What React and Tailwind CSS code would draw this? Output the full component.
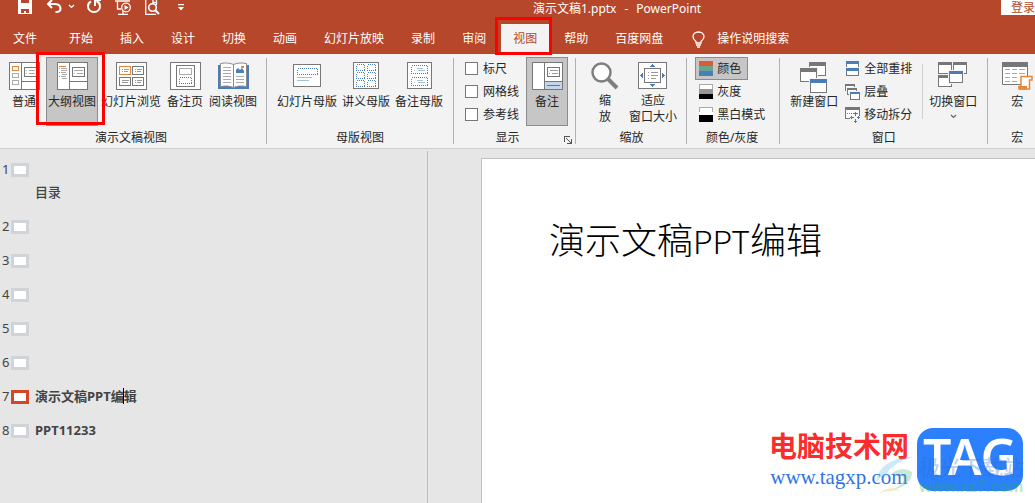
import React, { useState } from 'react';

const TABS = ['开始', '插入', '设计', '切换', '动画', '幻灯片放映', '录制', '审阅', '视图', '帮助', '百度网盘'];

const SLIDES = [
    { id: 1, body: '目录' },
    { id: 2 },
    { id: 3 },
    { id: 4 },
    { id: 5 },
    { id: 6 },
    { id: 7, title: '演示文稿PPT编', rest: '辑' },
    { id: 8, title: 'PPT11233' }
];

const GRAY = '#777777';
const BLUE = '#4a7ebb';
const ORANGE = '#e8873a';

const Icon = ({ w, h, children, crisp = true }) => (
    <svg width={w} height={h} viewBox={`0 0 ${w} ${h}`} fill='none' shapeRendering={crisp ? 'crispEdges' : 'auto'} aria-hidden='true' className='shrink-0'>
        {children}
    </svg>
);

/* ---- quick access toolbar ---- */

const SaveIcon = () => (
    <Icon w={14} h={14}>
        <path d='M0 0H14V14H0Z' fill='#fff' />
        <path d='M3 0H11V3H3ZM3 9H11V13H3Z' fill='#b7472a' />
        <path d='M6 11H8V13H6Z' fill='#fff' />
    </Icon>
);

const UndoIcon = () => (
    <Icon w={15} h={14} crisp={false}>
        <path d='M5 0L1 4L5 8M1.500 4H8C12 4 13.500 6.500 13.500 9C13.500 11 11.500 12 8.500 12' stroke='#fff' strokeWidth='2' />
    </Icon>
);

const RedoIcon = () => (
    <Icon w={14} h={14} crisp={false}>
        <path d='M4 1.500C2 2.500 1 4.300 1 6.200C1 9.500 3.600 12 7 12C10.400 12 13 9.500 13 6.200C13 4 11.800 2.200 9.500 1' stroke='#fff' strokeWidth='2' />
        <path d='M8 6V0H14' stroke='#fff' strokeWidth='2' />
    </Icon>
);

const PlayIcon = () => (
    <Icon w={16} h={15} crisp={false}>
        <path d='M0 1H15M2.500 1V9H6M3 14.300H13M8 11V14' stroke='#fff' strokeWidth='1.300' />
        <circle cx='11' cy='7.500' r='4.300' stroke='#fff' strokeWidth='1.300' fill='#b7472a' />
        <path d='M9.500 5L13.500 7.500L9.500 10Z' fill='#fff' />
    </Icon>
);

const PreviewIcon = () => (
    <Icon w={15} h={15} crisp={false}>
        <path d='M11 14.300H.700V0M11.500 5V0M8 0V2.500H11' stroke='#fff' strokeWidth='1.300' />
        <circle cx='7.500' cy='7.500' r='3.800' stroke='#fff' strokeWidth='1.600' />
        <path d='M10 10L14 14' stroke='#fff' strokeWidth='2.200' />
    </Icon>
);

const ChevronIcon = ({ color }) => (
    <Icon w={7} h={5} crisp={false}>
        <path d='M1 1L3.500 3.500L6 1' stroke={color} strokeWidth='1.200' />
    </Icon>
);

const MoreIcon = () => (
    <Icon w={6} h={7} crisp={false}>
        <path d='M0 0H6V1.300H0ZM0 3H6L3 6.500Z' fill='#fff' />
    </Icon>
);

const BulbIcon = () => (
    <Icon w={13} h={17} crisp={false}>
        <path d='M4 12V10.500C2.500 9.300 1 8 1 5.800C1 3 3.300 1 6.500 1C9.700 1 12 3 12 5.800C12 8 10.500 9.300 9 10.500V12ZM4 14H9M5 16H8' stroke='#fff' strokeWidth='1.300' />
    </Icon>
);

/* ---- ribbon ---- */

const NormalIcon = () => (
    <Icon w={31} h={28}>
        <path d='M.5 .5H30.500V27.500H.5Z' fill='#fff' stroke={GRAY} />
        <path d='M12.500 1V27M13 19.500H30' stroke={GRAY} />
        <path d='M3.500 4.500H9.500V8.500H3.500Z' stroke={ORANGE} />
        <path d='M3.500 11.500H9.500V15.500H3.500ZM3.500 18.500H9.500V22.500H3.500Z' stroke='#aaa' />
        <path d='M15.500 5.500H27.500V14.500H15.500Z' stroke={GRAY} />
        <path d='M17 8.500H18M20 8.500H26M17 11.500H18M20 11.500H26' stroke='#aaa' />
    </Icon>
);

const OutlineIcon = () => (
    <Icon w={31} h={28}>
        <path d='M.5 .5H30.500V27.500H.5Z' fill='#fff' stroke={GRAY} />
        <path d='M12.500 1V27M13 19.500H30' stroke={GRAY} />
        <path d='M2 4.500H9' stroke={ORANGE} />
        <path d='M4 6.500H10M4 8.500H10M4 10.500H9M5 12.500H10M4 14.500H9M5 16.500H10' stroke='#aaa' />
        <path d='M2 6.500H3M2 10.500H3M2 14.500H3' stroke={ORANGE} />
        <path d='M15.500 5.500H27.500V14.500H15.500Z' stroke={GRAY} />
        <path d='M17 8.500H26M17 11.500H18M20 11.500H26' stroke='#aaa' />
    </Icon>
);

const SorterIcon = () => (
    <Icon w={31} h={28}>
        <path d='M.5 .5H30.500V27.500H.5Z' fill='#fff' stroke={GRAY} />
        <path d='M3.500 4.500H14.500V12.500H3.500Z' stroke={ORANGE} />
        <path d='M16.500 4.500H27.500V12.500H16.500ZM3.500 15.500H14.500V23.500H3.500ZM16.500 15.500H27.500V23.500H16.500Z' stroke={GRAY} />
        <path d='M6 7.500H7M8 7.500H13M6 9.500H7M8 9.500H12M19 7.500H20M21 7.500H26M19 9.500H20M21 9.500H25M6 18.500H13M6 20.500H12M19 18.500H20M21 18.500H26M19 20.500H20M21 20.500H25' stroke='#999' />
    </Icon>
);

const NotesPageIcon = () => (
    <Icon w={31} h={28}>
        <path d='M.5 .5H30.500V27.500H.5Z' fill='#fff' stroke={GRAY} />
        <path d='M6.500 3.500H24.500V24.500H6.500Z' stroke={GRAY} />
        <path d='M9.500 6.500H21.500V12.500H9.500Z' stroke='#aaa' />
        <path d='M9.500 15.500H21.500V21.500H9.500Z' stroke={BLUE} strokeDasharray='1 1' />
    </Icon>
);

const ReadingIcon = () => (
    <Icon w={31} h={28} crisp={false}>
        <path d='M0 3H31V27H0Z' fill={BLUE} />
        <path d='M2.500 1.500C8 .5 12 1 15.500 2.500C19 1 23 .5 28.500 1.500V24.500C23 23.500 19 24 15.500 25.500C12 24 8 23.500 2.500 24.500Z' fill='#fff' stroke='#8a8a8a' />
        <path d='M15.500 2.500V25.500' stroke='#8a8a8a' />
        <path d='M5 5.500H13M5 8.500H13M5 11.500H13M5 14.500H13M5 17.500H13M5 20.500H13M18 14.500H26M18 17.500H26M18 20.500H26' stroke='#aaa' />
        <path d='M18 11V8L20 6L22 8L24 6L26 9V11Z' fill={BLUE} />
        <path d='M23 4H26V6H23Z' fill={ORANGE} />
    </Icon>
);

const SlideMasterIcon = () => (
    <Icon w={28} h={24}>
        <rect x='.5' y='.5' width='27' height='22' rx='1' fill='#fff' stroke={GRAY} />
        <path d='M4.500 4.500H24.500V10.500H4.500Z' stroke={BLUE} strokeDasharray='1 1' />
        <path d='M4 13.500H19M4 16.500H16' stroke='#a5bfdf' />
    </Icon>
);

const HandoutIcon = () => (
    <Icon w={26} h={27}>
        <path d='M.5 .5H25.500V26.500H.5Z' fill='#fff' stroke={GRAY} />
        <path d='M3.500 2.500H11.500V8.500H3.500ZM14.500 2.500H22.500V8.500H14.500ZM3.500 10.500H11.500V16.500H3.500ZM14.500 10.500H22.500V16.500H14.500ZM3.500 18.500H11.500V24.500H3.500ZM14.500 18.500H22.500V24.500H14.500Z' stroke={BLUE} strokeDasharray='1 1' />
    </Icon>
);

const NotesMasterIcon = () => (
    <Icon w={25} h={27}>
        <path d='M.5 .5H24.500V26.500H.5Z' fill='#fff' stroke={GRAY} />
        <path d='M4.500 3.500H20.500V11.500H4.500ZM4.500 15.500H20.500V23.500H4.500Z' stroke={BLUE} strokeDasharray='1 1' />
        <path d='M10 6.500H16M7 8.500H8M11 8.500H18M10 18.500H16M7 20.500H8M11 20.500H18' stroke='#a5bfdf' />
    </Icon>
);

const NotesIcon = () => (
    <Icon w={31} h={28}>
        <path d='M.5 .5H30.500V27.500H.5Z' fill='#fff' stroke={GRAY} />
        <path d='M13 20H30V27H13Z' fill='#c3d6ec' />
        <path d='M12.500 1V27M13 19.500H30' stroke={GRAY} />
        <path d='M15 23.500H28' stroke={BLUE} />
        <path d='M15.500 5.500H27.500V14.500H15.500Z' stroke={GRAY} />
        <path d='M18 8.500H26M17 11.500H18M20 11.500H26' stroke='#999' />
    </Icon>
);

const ZoomIcon = () => (
    <Icon w={28} h={28} crisp={false}>
        <circle cx='10.500' cy='10.500' r='9' fill='#fff' stroke='#7f7f7f' strokeWidth='2.500' />
        <path d='M17 17L26 26' stroke='#7f7f7f' strokeWidth='4' />
    </Icon>
);

const FitIcon = () => (
    <Icon w={30} h={28}>
        <path d='M.5 .5H28.500V26.500H.5Z' fill='#fff' stroke={GRAY} />
        <path d='M6.500 6.500H22.500V20.500H6.500Z' stroke={GRAY} />
        <path d='M10 10.500H11M13 10.500H20M10 13.500H11M13 13.500H20M10 16.500H11M13 16.500H18' stroke='#999' />
        <path d='M12 5L14.500 2L17 5ZM12 22L14.500 25L17 22ZM5 11L2 13.500L5 16ZM24 11L27 13.500L24 16Z' fill={BLUE} />
    </Icon>
);

const Swatch = ({ colors, outline }) => (
    <Icon w={14} h={15}>
        {colors.map((c, i) => (
            <rect key={c} x='0' y={(15 / colors.length) * i} width='14' height={15 / colors.length} fill={c} />
        ))}
        {outline && <path d='M.5 5V.5H13.500V5' stroke='#aaa' />}
    </Icon>
);

// small window with a title bar, used by all the window icons
const Win = ({ x, y, w, h, bar = 3, color = GRAY }) => (
    <g>
        <rect x={x - 1} y={y - 1} width={w + 2} height={h + 2} fill='#f3f3f3' />
        <rect x={x + 0.5} y={y + 0.5} width={w - 1} height={h - 1} fill='#fff' stroke={GRAY} />
        <rect x={x} y={y} width={w} height={bar} fill={color} />
    </g>
);

const NewWindowIcon = () => (
    <Icon w={28} h={32}>
        <Win x={9} y={0} w={17} h={14} bar={4} />
        <Win x={0} y={6} w={17} h={14} bar={4} />
        <Win x={10} y={17} w={17} h={14} bar={4} color={BLUE} />
    </Icon>
);

const ArrangeIcon = () => (
    <Icon w={15} h={16}>
        <Win x={1} y={0} w={13} h={7} color={BLUE} />
        <Win x={1} y={7} w={13} h={8} color={BLUE} />
    </Icon>
);

const CascadeIcon = () => (
    <Icon w={15} h={16}>
        <Win x={0} y={0} w={10} h={7} bar={2} />
        <Win x={2} y={4} w={10} h={7} bar={2} />
        <Win x={5} y={8} w={10} h={8} bar={2} color={BLUE} />
    </Icon>
);

const SplitIcon = () => (
    <Icon w={15} h={16}>
        <path d='M.5 .5H14.500V11.500H.5Z' fill='#fff' stroke={GRAY} />
        <path d='M0 0H15V3H0Z' fill={GRAY} />
        <path d='M2 6.500H13' stroke={BLUE} strokeDasharray='1 1' />
        <path d='M10.500 4V16M5 10.500H15' stroke='#f8f8f8' strokeWidth='3' />
        <path d='M10.500 5V9M10.500 12V16M5 10.500H9M12 10.500H15M9 6.500H12M9 14.500H12M6.500 9V12M13.500 9V12' stroke={BLUE} />
    </Icon>
);

const SwitchIcon = () => (
    <Icon w={30} h={26}>
        <Win x={0} y={0} w={14} h={12} />
        <Win x={15} y={0} w={14} h={12} />
        <Win x={0} y={13} w={14} h={12} />
        <Win x={11} y={9} w={14} h={12} color={BLUE} />
    </Icon>
);

const MacroIcon = () => (
    <Icon w={31} h={28} crisp={false}>
        <path d='M.5 .5H25.500V22.500H.5Z' fill='#fff' stroke={GRAY} />
        <path d='M0 0H26V5H0Z' fill={GRAY} />
        <path d='M3 7.500H8M10 7.500H15M17 7.500H23M3 11.500H8M10 11.500H15M17 11.500H23M3 15.500H8M10 15.500H15M3 19.500H8M10 19.500H15' stroke='#aaa' />
        <path d='M19 14.500H30V18H27.500V27H17V24.500H19Z' fill='#fff' stroke={ORANGE} strokeWidth='1.500' />
        <path d='M16.500 24H25V27.500H17Z' fill={ORANGE} />
    </Icon>
);

const LauncherIcon = () => (
    <Icon w={8} h={8}>
        <path d='M.5 6V.5H6M7.500 3V7.500H3' stroke='#555' />
        <path d='M2 2L7 7' stroke='#555' shapeRendering='auto' />
    </Icon>
);

const BigButton = ({ icon, label, active, children }) => (
    <button
        type='button'
        className={`relative flex h-[69px] min-w-[42px] shrink-0 flex-col items-center border px-px pt-1 leading-4 whitespace-pre ${active ? 'border-[#8c8c8c] bg-[#c6c6c6]' : 'border-transparent'}`}
    >
        <span className='flex h-8 items-start'>{icon}</span>
        {label}
        {children}
    </button>
);

const SmallButton = ({ icon, label, active }) => (
    <button
        type='button'
        className={`flex h-[23px] items-center gap-1 border pl-[3px] whitespace-nowrap ${active ? 'border-[#8c8c8c] bg-[#c6c6c6] pr-1.5' : 'border-transparent pr-[3px]'}`}
    >
        {icon}
        {label}
    </button>
);

const Group = ({ name, className, children, launcher }) => (
    <>
        <section aria-label={name} className={`flex shrink-0 flex-col ${className}`}>
            <div className='flex flex-1 items-start gap-px'>{children}</div>
            <div className='flex h-[18px] items-start justify-center leading-4'>
                <span className={launcher ? 'flex-1 pr-3.5 text-center' : ''}>{name}</span>
                {launcher && (
                    <button type='button' aria-label='更多' className='pt-1.5 pr-0.5'>
                        <LauncherIcon />
                    </button>
                )}
            </div>
        </section>
        <div className='mt-px mb-1 w-px shrink-0 bg-[#b1b1b1]' />
    </>
);

const CheckOption = ({ label }) => (
    <label className='flex h-[23px] items-center gap-[5px]'>
        <input type='checkbox' className='size-[13px] appearance-none border border-[#777] bg-white checked:bg-[#b7472a]' />
        {label}
    </label>
);

const TitleBar = () => (
    <header className='flex h-6 shrink-0 items-start text-white'>
        <div className='flex flex-8 items-start pl-[18px]'>
            <button type='button' aria-label='保存'><SaveIcon /></button>
            <button type='button' aria-label='撤消' className='ml-[15px]'><UndoIcon /></button>
            <button type='button' aria-label='撤消选项' className='ml-1.5 pt-1'><ChevronIcon color='#fff' /></button>
            <button type='button' aria-label='恢复' className='ml-3'><RedoIcon /></button>
            <button type='button' aria-label='从头开始' className='ml-[14px]'><PlayIcon /></button>
            <button type='button' aria-label='打印预览' className='ml-[14px]'><PreviewIcon /></button>
            <button type='button' aria-label='自定义快速访问工具栏' className='ml-[18px] pt-1'><MoreIcon /></button>
        </div>
        <h1 className='mr-3 flex shrink-0 gap-2 pt-px leading-4 whitespace-nowrap'>
            <span>演示文稿1.pptx</span>
            <span>-</span>
            <span>PowerPoint</span>
        </h1>
        <div className='flex flex-5 justify-end'>
            <button type='button' className='-mr-1 h-[15px] shrink-0 bg-white pr-1 pl-2.5 leading-3 text-[#b7472a]'>登录</button>
        </div>
    </header>
);

const TabBar = ({ tab, onSelect }) => (
    <nav className='flex h-[30px] shrink-0 items-stretch gap-[3px] pl-px text-white'>
        <button type='button' className='mr-[17px] shrink-0 pl-3'>文件</button>
        {TABS.map((name) => (
            <button
                key={name}
                type='button'
                onClick={() => onSelect(name)}
                className={`relative shrink-0 px-3 ${tab === name ? 'bg-[#f3f3f3] text-[#b7472a]' : ''}`}
            >
                {name}
                {name === '视图' && <span className='absolute -top-[7px] -right-[3px] -bottom-px -left-1.5 z-10 border-3 border-[#ff0000]' />}
            </button>
        ))}
        <button type='button' className='ml-[14px] flex shrink-0 items-center gap-3'>
            <BulbIcon />
            操作说明搜索
        </button>
    </nav>
);

const Ribbon = () => (
    <div className='flex h-[95px] shrink-0 border-b border-[#cfcfcf] bg-[#f3f3f3] pt-[3px]'>
        <Group name='演示文稿视图' className='pr-[7px] pl-[3px]'>
            <BigButton icon={<NormalIcon />} label='普通' />
            <BigButton icon={<OutlineIcon />} label='大纲视图' active>
                <span className='absolute -top-1.5 -right-2 bottom-0 -left-[11px] z-10 border-3 border-[#ff0000]' />
            </BigButton>
            <BigButton icon={<SorterIcon />} label='幻灯片浏览' />
            <BigButton icon={<NotesPageIcon />} label='备注页' />
            <BigButton icon={<ReadingIcon />} label='阅读视图' />
        </Group>
        <Group name='母版视图' className='px-2'>
            <BigButton icon={<span className='pt-0.5'><SlideMasterIcon /></span>} label='幻灯片母版' />
            <BigButton icon={<HandoutIcon />} label='讲义母版' />
            <BigButton icon={<NotesMasterIcon />} label='备注母版' />
        </Group>
        <Group name='显示' className='pr-px pl-[11px]' launcher>
            <div className='mr-1.5'>
                <CheckOption label='标尺' />
                <CheckOption label='网格线' />
                <CheckOption label='参考线' />
            </div>
            <div className='pr-1.5'>
                <BigButton icon={<NotesIcon />} label='备注' active />
            </div>
        </Group>
        <Group name='缩放' className='pr-[7px] pl-2'>
            <BigButton icon={<ZoomIcon />} label={'缩\n放'} />
            <BigButton icon={<FitIcon />} label={'适应\n窗口大小'} />
        </Group>
        <Group name='颜色/灰度' className='pr-2.5 pl-2'>
            <div className='flex flex-col items-start'>
                <SmallButton icon={<Swatch colors={['#d95b38', '#68a490', '#4a7ebb']} />} label='颜色' active />
                <SmallButton icon={<Swatch colors={['#ffffff', '#969696', '#000000']} outline />} label='灰度' />
                <SmallButton icon={<Swatch colors={['#ffffff', '#000000']} outline />} label='黑白模式' />
            </div>
        </Group>
        <Group name='窗口' className='px-2'>
            <BigButton icon={<NewWindowIcon />} label='新建窗口' />
            <div className='flex flex-col items-start'>
                <SmallButton icon={<ArrangeIcon />} label='全部重排' />
                <SmallButton icon={<CascadeIcon />} label='层叠' />
                <SmallButton icon={<SplitIcon />} label='移动拆分' />
            </div>
            <div className='mr-[3px] ml-[5px] mt-[7px] h-[55px] w-px bg-[#cfcfcf]' />
            <BigButton icon={<SwitchIcon />} label='切换窗口'>
                <span className='pt-1'><ChevronIcon color='#666' /></span>
            </BigButton>
        </Group>
        <Group name='宏' className='px-2'>
            <BigButton icon={<MacroIcon />} label='宏' />
        </Group>
    </div>
);

const Outline = ({ current }) => (
    <aside className='mt-0.5 w-[428px] shrink-0 border-r border-[#bcbcbc] pt-3 text-[13px] text-[#444]'>
        <ol>
            {SLIDES.map((s) => (
                <li key={s.id} className='pb-5'>
                    <div className='flex h-[14px] items-center pl-0.5'>
                        <span className='w-[9px] shrink-0'>{s.id}</span>
                        <span className={`h-[14px] w-[18px] shrink-0 border-3 bg-white ${s.id === current ? 'border-[#d24726]' : 'border-[#d0d4d8]'}`} />
                        {s.title && (
                            <span className='flex items-center pb-0.5 pl-1.5 leading-4 font-bold whitespace-nowrap'>
                                {s.title}
                                {s.rest && <span className='-ml-px h-4 w-px bg-black' />}
                                {s.rest}
                            </span>
                        )}
                    </div>
                    {s.body && <p className='mt-[7px] pl-[35px] leading-4 font-medium'>{s.body}</p>}
                </li>
            ))}
        </ol>
    </aside>
);

const Watermark = () => (
    <div className='absolute right-3 bottom-3 flex items-center gap-2'>
        <div className='flex flex-col items-center whitespace-nowrap'>
            <div className="font-['Noto_Sans_CJK_SC',sans-serif] text-[28px] leading-9 font-bold text-[#fb2c2c]">电脑技术网</div>
            <div className="font-['Liberation_Serif',serif] text-[21px] leading-7 text-[#2f74e8]">www.tagxp.com</div>
        </div>
        <div className="flex h-[63px] w-[106px] items-center justify-center rounded-2xl bg-[#2d80fd] pb-1.5 font-['Noto_Sans',sans-serif] text-[50px] leading-none font-semibold text-white">
            TAG
        </div>
        <div className='absolute -right-px -bottom-1 flex items-end opacity-30'>
            <svg width='40' height='40' viewBox='0 0 40 40' fill='none' aria-hidden='true'>
                <path d='M2 28C0 14 16 2 38 2C22 7 11 14 12 22C9 20 4 22 2 28Z' fill='#5eb6e6' />
                <path d='M14 21C20 14 30 12 37 17C38 27 26 34 14 36C24 32 31 27 28 22C25 18 19 19 14 21Z' fill='#4fb47c' />
                <path d='M4 38C12 32 20 32 25 36C18 35 12 36 4 38Z' fill='#e8b82e' />
            </svg>
            <div className='pl-1 text-[21px] leading-6 font-medium text-[#2b6ac8]'>
                极光下载站
                <div className="font-['Liberation_Sans',sans-serif] text-base leading-4 font-bold text-[#22b53a]">www.xz7.com</div>
            </div>
        </div>
    </div>
);

const App = () => {
    const [tab, setTab] = useState('视图');

    return (
        <div className="flex h-screen flex-col overflow-hidden bg-[#b7472a] font-['Noto_Sans','Noto_Sans_CJK_SC',sans-serif] text-xs text-[#262626]">
            <TitleBar />
            <TabBar tab={tab} onSelect={setTab} />
            <Ribbon />
            <div className='flex min-h-0 flex-1 bg-[#e6e6e6]'>
                <Outline current={7} />
                <main className='relative flex min-w-0 flex-1 pt-[9px] pl-[53px]'>
                    <div className='flex-1 border-t border-l border-[#c3c3c3] bg-white pt-[52px] pl-[67px]'>
                        <h2 className="font-['Noto_Sans_CJK_SC',sans-serif] text-4xl leading-[54px] font-light whitespace-nowrap text-black">
                            演示文稿<span className='text-[32px]'>PPT</span>编辑
                        </h2>
                    </div>
                    <Watermark />
                </main>
            </div>
        </div>
    );
};

export default App;
